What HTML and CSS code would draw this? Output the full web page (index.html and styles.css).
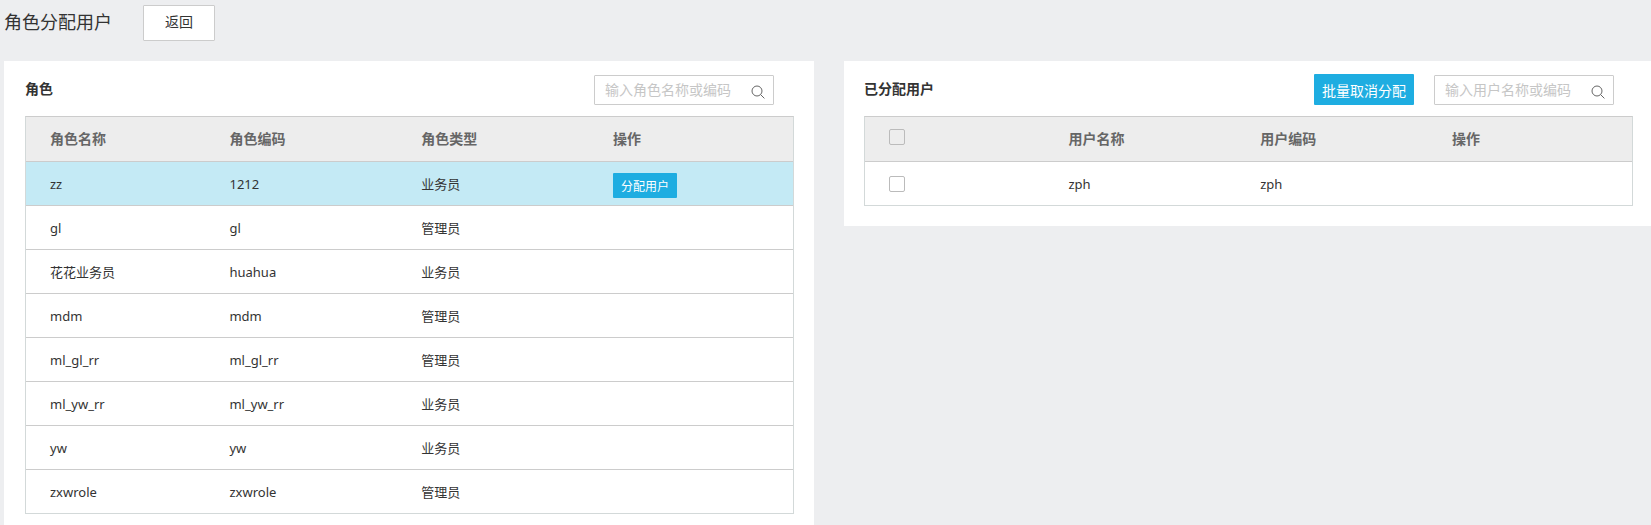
FILE: index.html
```html
<!DOCTYPE html>
<html lang="zh-CN">
<head>
<meta charset="utf-8">
<title>角色分配用户</title>
<link rel="stylesheet" href="styles.css">
</head>
<body>
<header class="page-head">
  <h1 class="page-title">角色分配用户</h1>
  <button type="button" class="btn-back">返回</button>
</header>
<main class="panels">
  <section class="panel panel-roles">
    <div class="panel-head">
      <h2 class="panel-title">角色</h2>
      <div class="search">
        <input type="text" class="search-input" aria-label="搜索角色" placeholder="输入角色名称或编码">
        <button type="button" class="search-btn" aria-label="搜索"><svg class="search-icon" viewBox="0 0 14 14"><circle cx="6" cy="6" r="5"/><path d="M9.6 9.6 13.4 13.4"/></svg></button>
      </div>
    </div>
    <table class="grid">
      <colgroup><col class="col-first"><col class="col-mid"><col class="col-mid"><col></colgroup>
      <thead><tr><th>角色名称</th><th>角色编码</th><th>角色类型</th><th>操作</th></tr></thead>
      <tbody>
        <tr class="selected"><td>zz</td><td>1212</td><td>业务员</td><td class="cell-action"><button type="button" class="btn-assign">分配用户</button></td></tr>
        <tr><td>gl</td><td>gl</td><td>管理员</td><td></td></tr>
        <tr><td>花花业务员</td><td>huahua</td><td>业务员</td><td></td></tr>
        <tr><td>mdm</td><td>mdm</td><td>管理员</td><td></td></tr>
        <tr><td>ml_gl_rr</td><td>ml_gl_rr</td><td>管理员</td><td></td></tr>
        <tr><td>ml_yw_rr</td><td>ml_yw_rr</td><td>业务员</td><td></td></tr>
        <tr><td>yw</td><td>yw</td><td>业务员</td><td></td></tr>
        <tr><td>zxwrole</td><td>zxwrole</td><td>管理员</td><td></td></tr>
      </tbody>
    </table>
  </section>
  <section class="panel panel-users">
    <div class="panel-head">
      <h2 class="panel-title">已分配用户</h2>
      <button type="button" class="btn-batch">批量取消分配</button>
      <div class="search">
        <input type="text" class="search-input" aria-label="搜索用户" placeholder="输入用户名称或编码">
        <button type="button" class="search-btn" aria-label="搜索"><svg class="search-icon" viewBox="0 0 14 14"><circle cx="6" cy="6" r="5"/><path d="M9.6 9.6 13.4 13.4"/></svg></button>
      </div>
    </div>
    <table class="grid">
      <colgroup><col class="col-first"><col class="col-mid"><col class="col-mid"><col></colgroup>
      <thead><tr><th class="cell-check-head"><input type="checkbox" class="check" aria-label="全选"></th><th>用户名称</th><th>用户编码</th><th>操作</th></tr></thead>
      <tbody>
        <tr><td><input type="checkbox" class="check" aria-label="选择 zph"></td><td>zph</td><td>zph</td><td></td></tr>
      </tbody>
    </table>
  </section>
</main>
</body>
</html>
```
FILE: styles.css
```css
* { box-sizing: border-box; }

body {
  margin: 0;
  padding: 5px 0 0 4px;
  height: 100vh;
  overflow: hidden;
  background: #edeef0;
  color: #333;
  font: 13px/20px "Noto Sans", "Noto Sans CJK SC", sans-serif;
}

button, input { margin: 0; font-family: inherit; }
button { cursor: pointer; }

.page-head {
  display: flex;
  align-items: center;
  gap: 31px;
  margin-bottom: 20px;
}

.page-title {
  margin: 0;
  padding-bottom: 4px;
  font-size: 18px;
  line-height: 24px;
  font-weight: 400;
  font-family: "Noto Sans CJK SC", sans-serif;
}

.btn-back {
  width: 72px;
  height: 36px;
  padding: 0 0 4px;
  border: 1px solid #ccc;
  border-radius: 1px;
  background: #fff;
  color: #333;
  font-size: 14px;
}

.panels {
  display: grid;
  grid-template-columns: 810fr 807fr;
  gap: 30px;
  align-items: start;
}

.panel { padding: 13px 20px 20px; background: #fff; }
.panel-roles { padding-left: 21px; }
.panel-users { padding-right: 18px; }

.panel-head {
  display: flex;
  align-items: center;
  gap: 20px;
  height: 31px;
  margin-bottom: 11px;
  padding-right: 20px;
}

.panel-users .panel-head { padding-right: 19px; }

.panel-title {
  margin: 0 auto 0 0;
  padding-bottom: 3px;
  font-size: 14px;
  line-height: 20px;
  font-weight: 700;
  font-family: "Noto Sans CJK SC", sans-serif;
}

.btn-batch {
  width: 100px;
  height: 31px;
  padding: 0;
  border: 0;
  border-radius: 1px;
  background: #1eade1;
  color: #fff;
  font-size: 14px;
}

.search {
  display: flex;
  align-items: center;
  width: 180px;
  height: 30px;
  border: 1px solid #ccc;
  border-radius: 1px;
  background: #fff;
}

.search-input {
  flex: 1;
  min-width: 0;
  height: 28px;
  padding: 0 0 0 10px;
  border: 0;
  outline: 0;
  background: none;
  color: #333;
  font-size: 14px;
}

.search-input::placeholder { color: #c6c6c6; }

.search-btn {
  display: flex;
  padding: 4px 8px 0;
  border: 0;
  background: none;
}

.search-icon {
  width: 14px;
  height: 14px;
  fill: none;
  stroke: #666;
  stroke-width: 1;
}

.grid {
  width: 100%;
  table-layout: fixed;
  border: 1px solid #d3d9d9;
  border-top-color: #ccc;
  border-spacing: 0;
}

.col-first { width: 23.4%; }
.col-mid { width: 25%; }

.grid th, .grid td {
  height: 44px;
  padding: 0 0 0 24px;
  border-bottom: 1px solid #ccc;
  text-align: left;
  vertical-align: middle;
}

.grid th {
  height: 45px;
  padding-bottom: 2px;
  background: #ededed;
  color: #666;
  font-size: 14px;
  font-weight: 700;
  font-family: "Noto Sans CJK SC", sans-serif;
}

.grid tbody tr:last-child td { height: 43px; border-bottom: 0; }
.grid .selected td { background: #c4eaf5; }
.grid .selected .cell-action { padding-top: 4px; }
.grid .cell-check-head { padding-bottom: 4px; }

.btn-assign {
  display: block;
  width: 64px;
  height: 25px;
  padding: 0;
  border: 0;
  border-radius: 1px;
  background: #1eade1;
  color: #fff;
  font-size: 12px;
}

.check {
  display: block;
  appearance: none;
  width: 16px;
  height: 16px;
  border: 1px solid #bbb;
  border-radius: 2px;
}

.check:checked { background: #1eade1; border-color: #1eade1; }
```
